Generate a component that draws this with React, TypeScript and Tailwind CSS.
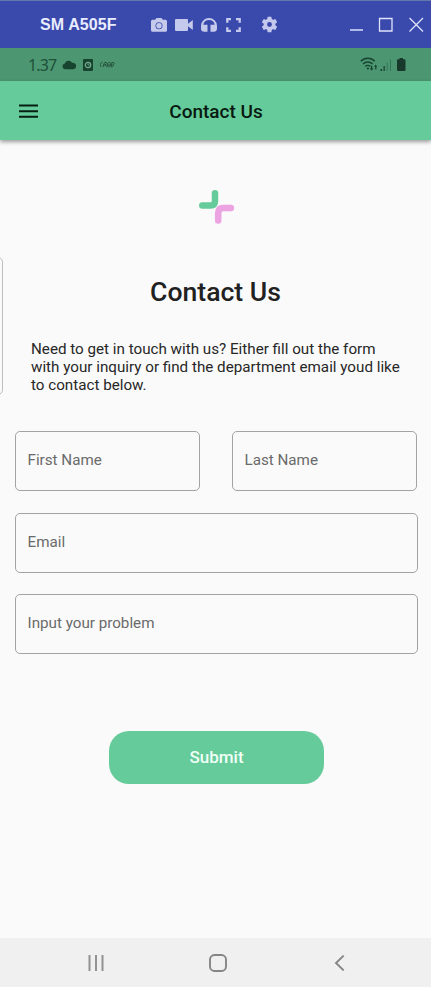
import React from "react";

function WindowBar() {
  return (
    <header className="flex h-12 shrink-0 items-center border-t border-[#6478ae] bg-[#3a49ac] text-[#c5caec]">
      <span className="ml-10 w-[111px] whitespace-nowrap font-['Liberation_Sans',Arial,sans-serif] text-[16px] font-bold leading-none tracking-[0.1px] text-[#e9ecff]">
        SM A505F
      </span>
      <svg className="h-[14px] w-4 shrink-0" viewBox="0 0 16 14" fill="currentColor">
        <path fillRule="evenodd" d="M5.500 0h5l1.300 1.700h2.700A1.500 1.500 0 0 1 16 3.200v9A1.500 1.500 0 0 1 14.500 13.700h-13A1.500 1.500 0 0 1 0 12.200v-9a1.500 1.500 0 0 1 1.500-1.500h2.700zM8 4.200a3.500 3.500 0 1 0 0 7 3.500 3.500 0 0 0 0-7zm0 .8a2.700 2.700 0 1 1 0 5.400 2.700 2.700 0 0 1 0-5.400z" />
      </svg>
      <svg className="ml-2 h-3 w-[18px] shrink-0" viewBox="0 0 18 12" fill="currentColor">
        <path d="M1 0h11a1 1 0 0 1 1 1v3.800L17.800 1v10L13 7.200V11a1 1 0 0 1-1 1H1a1 1 0 0 1-1-1V1a1 1 0 0 1 1-1z" />
      </svg>
      <svg className="ml-2 h-[14px] w-4 shrink-0" viewBox="0 0 16 14" fill="currentColor">
        <path d="M8 0a8 8 0 0 0-8 7.700v2.800a3.300 3.300 0 0 0 3.300 3.200h3.200V6.800H2.300A5.800 5.800 0 0 1 8 2a5.800 5.800 0 0 1 5.700 4.800H9.500v6.900h3.200a3.300 3.300 0 0 0 3.300-3.200V7.700A8 8 0 0 0 8 0z" />
      </svg>
      <svg className="ml-[9px] h-[14px] w-[15px] shrink-0" viewBox="0 0 15 14" fill="none" stroke="currentColor" strokeWidth="2.300">
        <path d="M1.300 4.700V1.200H5M10 1.200h3.700v3.500M1.300 9.300v3.500H5M10 12.800h3.700V9.300" />
      </svg>
      <svg className="ml-[20px] h-[17px] w-[17px] shrink-0" viewBox="1.500 1.500 21 21" fill="currentColor">
        <path d="M19.140 12.940c.040-.300.060-.610.060-.940s-.020-.640-.070-.940l2.030-1.580c.180-.140.230-.410.120-.610l-1.920-3.320c-.120-.220-.370-.290-.590-.220l-2.390.960c-.500-.380-1.030-.700-1.620-.940l-.360-2.540A.484.484 0 0 0 13.920 2.400h-3.840c-.240 0-.430.170-.470.410l-.360 2.540c-.590.240-1.130.570-1.620.940l-2.390-.960c-.220-.080-.470 0-.590.220L2.740 8.870c-.120.210-.080.470.120.610l2.030 1.580c-.050.300-.090.630-.090.940s.020.640.070.940l-2.030 1.580c-.180.140-.230.410-.120.610l1.920 3.320c.120.220.370.290.590.220l2.390-.960c.500.380 1.030.700 1.620.940l.360 2.540c.050.240.240.410.480.410h3.840c.240 0 .440-.170.470-.410l.360-2.540c.590-.240 1.130-.560 1.620-.940l2.390.960c.220.080.470 0 .590-.220l1.920-3.320c.120-.220.070-.470-.120-.610zM12 15a3 3 0 1 1 0-6 3 3 0 0 1 0 6z" />
      </svg>
      <svg className="ml-auto mr-[7px] h-4 w-[75px] shrink-0" viewBox="0 0 75 16" fill="none" stroke="#e0e4fb" strokeWidth="1.300">
        <path d="M1 13h13" stroke="#b7c1ee" strokeWidth="1.900" />
        <path d="M30.500 1.500h12.500v12.500H30.500z" />
        <path d="M60.500 1l13.500 13.500M74 1L60.500 14.500" />
      </svg>
    </header>
  );
}

function StatusBar() {
  return (
    <div className="flex h-[33px] shrink-0 items-center bg-[#4c9672] text-[#17442f]">
      <span className="ml-7 w-[34px] whitespace-nowrap font-['Noto_Sans','Open_Sans',sans-serif] text-[16px] leading-none tracking-[-0.900px] text-[#1d5138]">
        1.37
      </span>
      <svg className="h-[10px] w-[14px] shrink-0" viewBox="0 0 14 10" fill="currentColor">
        <path d="M3.200 9.300a3 3 0 0 1-.4-5.900A4 4 0 0 1 10 2.800a3.300 3.300 0 1 1 .8 6.500z" />
      </svg>
      <svg className="ml-[7px] h-3 w-[10px] shrink-0" viewBox="0 0 10 12">
        <rect width="10" height="12" rx="1" fill="currentColor" />
        <circle cx="5" cy="6" r="2.700" fill="none" stroke="#75ac8e" strokeWidth="1.200" />
        <path d="M5 4.300V6h1.500" fill="none" stroke="#75ac8e" strokeWidth=".8" />
      </svg>
      <svg className="ml-[7px] h-[7px] w-[15px] shrink-0" viewBox="0 0 15 7" fill="none" stroke="#28573f" strokeWidth="1">
        <path d="M2.500 1C.2 1.500-.2 5 1.300 6M3 6l1.500-4.500h2c1 .3.400 2-1.500 2.200L7 6M3 4h3M9.700 1.500C7.200 1 6.700 6 8.500 6s3-4.500 1.200-4.500M7.500 4h3M11.700 1.500h1.500c1.500 0 1.500 2-.5 2.200 1.500.5.500 2.300-1.700 2.300l1-4.500" />
      </svg>
      <svg className="ml-auto mr-6 h-[15px] w-[47px] shrink-0" viewBox="0 0 47 15">
        <g fill="none" stroke="#17442f" strokeWidth="1.400">
          <path d="M.8 4.300c4-4 10-4 14 0M3 7c2.700-2.700 7-2.700 9.600 0M5.300 9.500c1.500-1.500 3.500-1.500 5 0" />
        </g>
        <path d="M6.500 11.500l1.400-1.300 1.400 1.300-1.400 1.300zM11 8.700v2.500H9.700l2 2.500 1.700-2.500h-1.200V8.700zM15.200 12.500V9.700H14l1.700-2.200 1.500 2.200h-.8v2.800zM20.500 12h1.600v2h-1.600zM23.500 9h1.300v5h-1.300z" fill="#17442f" />
        <path d="M27.200 5.500V14M30.500 2.500V14" stroke="#327557" strokeWidth="1" />
        <path d="M39.500 1h3.500v1.200h1.500a1 1 0 0 1 1 1V13a1 1 0 0 1-1 1H38a1 1 0 0 1-1-1V3.200a1 1 0 0 1 1-1h1.500z" fill="#17382a" />
      </svg>
    </div>
  );
}

function AppBar() {
  return (
    <div className="z-10 grid h-[59px] shrink-0 grid-cols-[1fr_auto_1fr] items-center bg-[#66cb9a] shadow-[0_2px_4px_rgba(0,0,0,0.38)]">
      <button className="ml-[19px] w-[19px]" aria-label="Menu">
        <svg className="block h-[14px] w-[19px]" viewBox="0 0 19 14" fill="none" stroke="#061f13" strokeWidth="2">
          <path d="M0 1.500h19M0 7.200h19M0 12.700h19" />
        </svg>
      </button>
      <h1 className="pl-px pt-px text-[19px] font-medium leading-none text-[#071910]">Contact Us</h1>
    </div>
  );
}

function Field({ label, className = "" }: { label: string; className?: string }) {
  return (
    <div className={`flex h-[60px] items-center rounded-[5px] border border-[#a3a3a3] pl-3 text-[15.200px] text-[#6a6a6a] ${className}`}>
      <span className="-ml-[0.500px] leading-none">{label}</span>
    </div>
  );
}

export default function App() {
  return (
    <div className="flex h-[987px] w-[431px] flex-col overflow-hidden bg-[#fafafa] font-[Roboto,sans-serif]">
      <WindowBar />
      <StatusBar />
      <AppBar />
      <main className="relative flex grow flex-col">
        <div className="absolute -left-[5px] top-[117px] h-[138px] w-2 rounded-r-[5px] border border-[#bdbdbd]" />
        <svg className="ml-[198px] mt-[49px] h-9 w-[37px]" viewBox="0 0 37 36" fill="none" strokeWidth="6.500" strokeLinecap="round">
          <path d="M17 4.200v7.800q0 4.500-4.500 4.500H4.300" stroke="#66cb9a" />
          <path d="M20.200 31.500V24q0-5 5-5h7.700" stroke="#eba3e2" />
        </svg>
        <h2 className="mt-[51px] text-center text-[26.600px] font-medium leading-[32px] text-[#212121]">Contact Us</h2>
        <p className="ml-[31px] mt-8 whitespace-nowrap text-[15.200px] leading-[18px] text-[#272727]">
          Need to get in touch with us? Either fill out the form
          <br />
          with your inquiry or find the department email youd like
          <br />
          to contact below.
        </p>
        <form className="ml-[15px] mt-[37px] flex w-[403px] flex-col gap-[21.500px]">
          <div className="flex gap-8">
            <Field label="First Name" className="w-[185px]" />
            <Field label="Last Name" className="w-[185px]" />
          </div>
          <Field label="Email" />
          <Field label="Input your problem" />
        </form>
        <button className="ml-[109px] mt-[77px] h-[53px] w-[215px] rounded-[20px] bg-[#66cb9a] text-[17px] font-medium leading-none text-[#f0fff7]">
          Submit
        </button>
      </main>
      <nav className="flex h-[49px] shrink-0 items-center bg-[#f0f0f0]">
        <svg className="ml-[88px] h-4 w-4" viewBox="0 0 16 16" stroke="#929292" strokeWidth="2">
          <path d="M1.500 0v16M8 0v16M14.500 0v16" />
        </svg>
        <svg className="ml-[105px] h-[18px] w-[18px]" viewBox="0 0 18 18" fill="none" stroke="#858585" strokeWidth="1.900">
          <rect x="1" y="1" width="16" height="16" rx="4.500" />
        </svg>
        <svg className="ml-[107px] h-4 w-[11px]" viewBox="0 0 11 16" fill="none" stroke="#858585" strokeWidth="1.900">
          <path d="M9.700.6L2 8l7.700 7.400" />
        </svg>
      </nav>
    </div>
  );
}
